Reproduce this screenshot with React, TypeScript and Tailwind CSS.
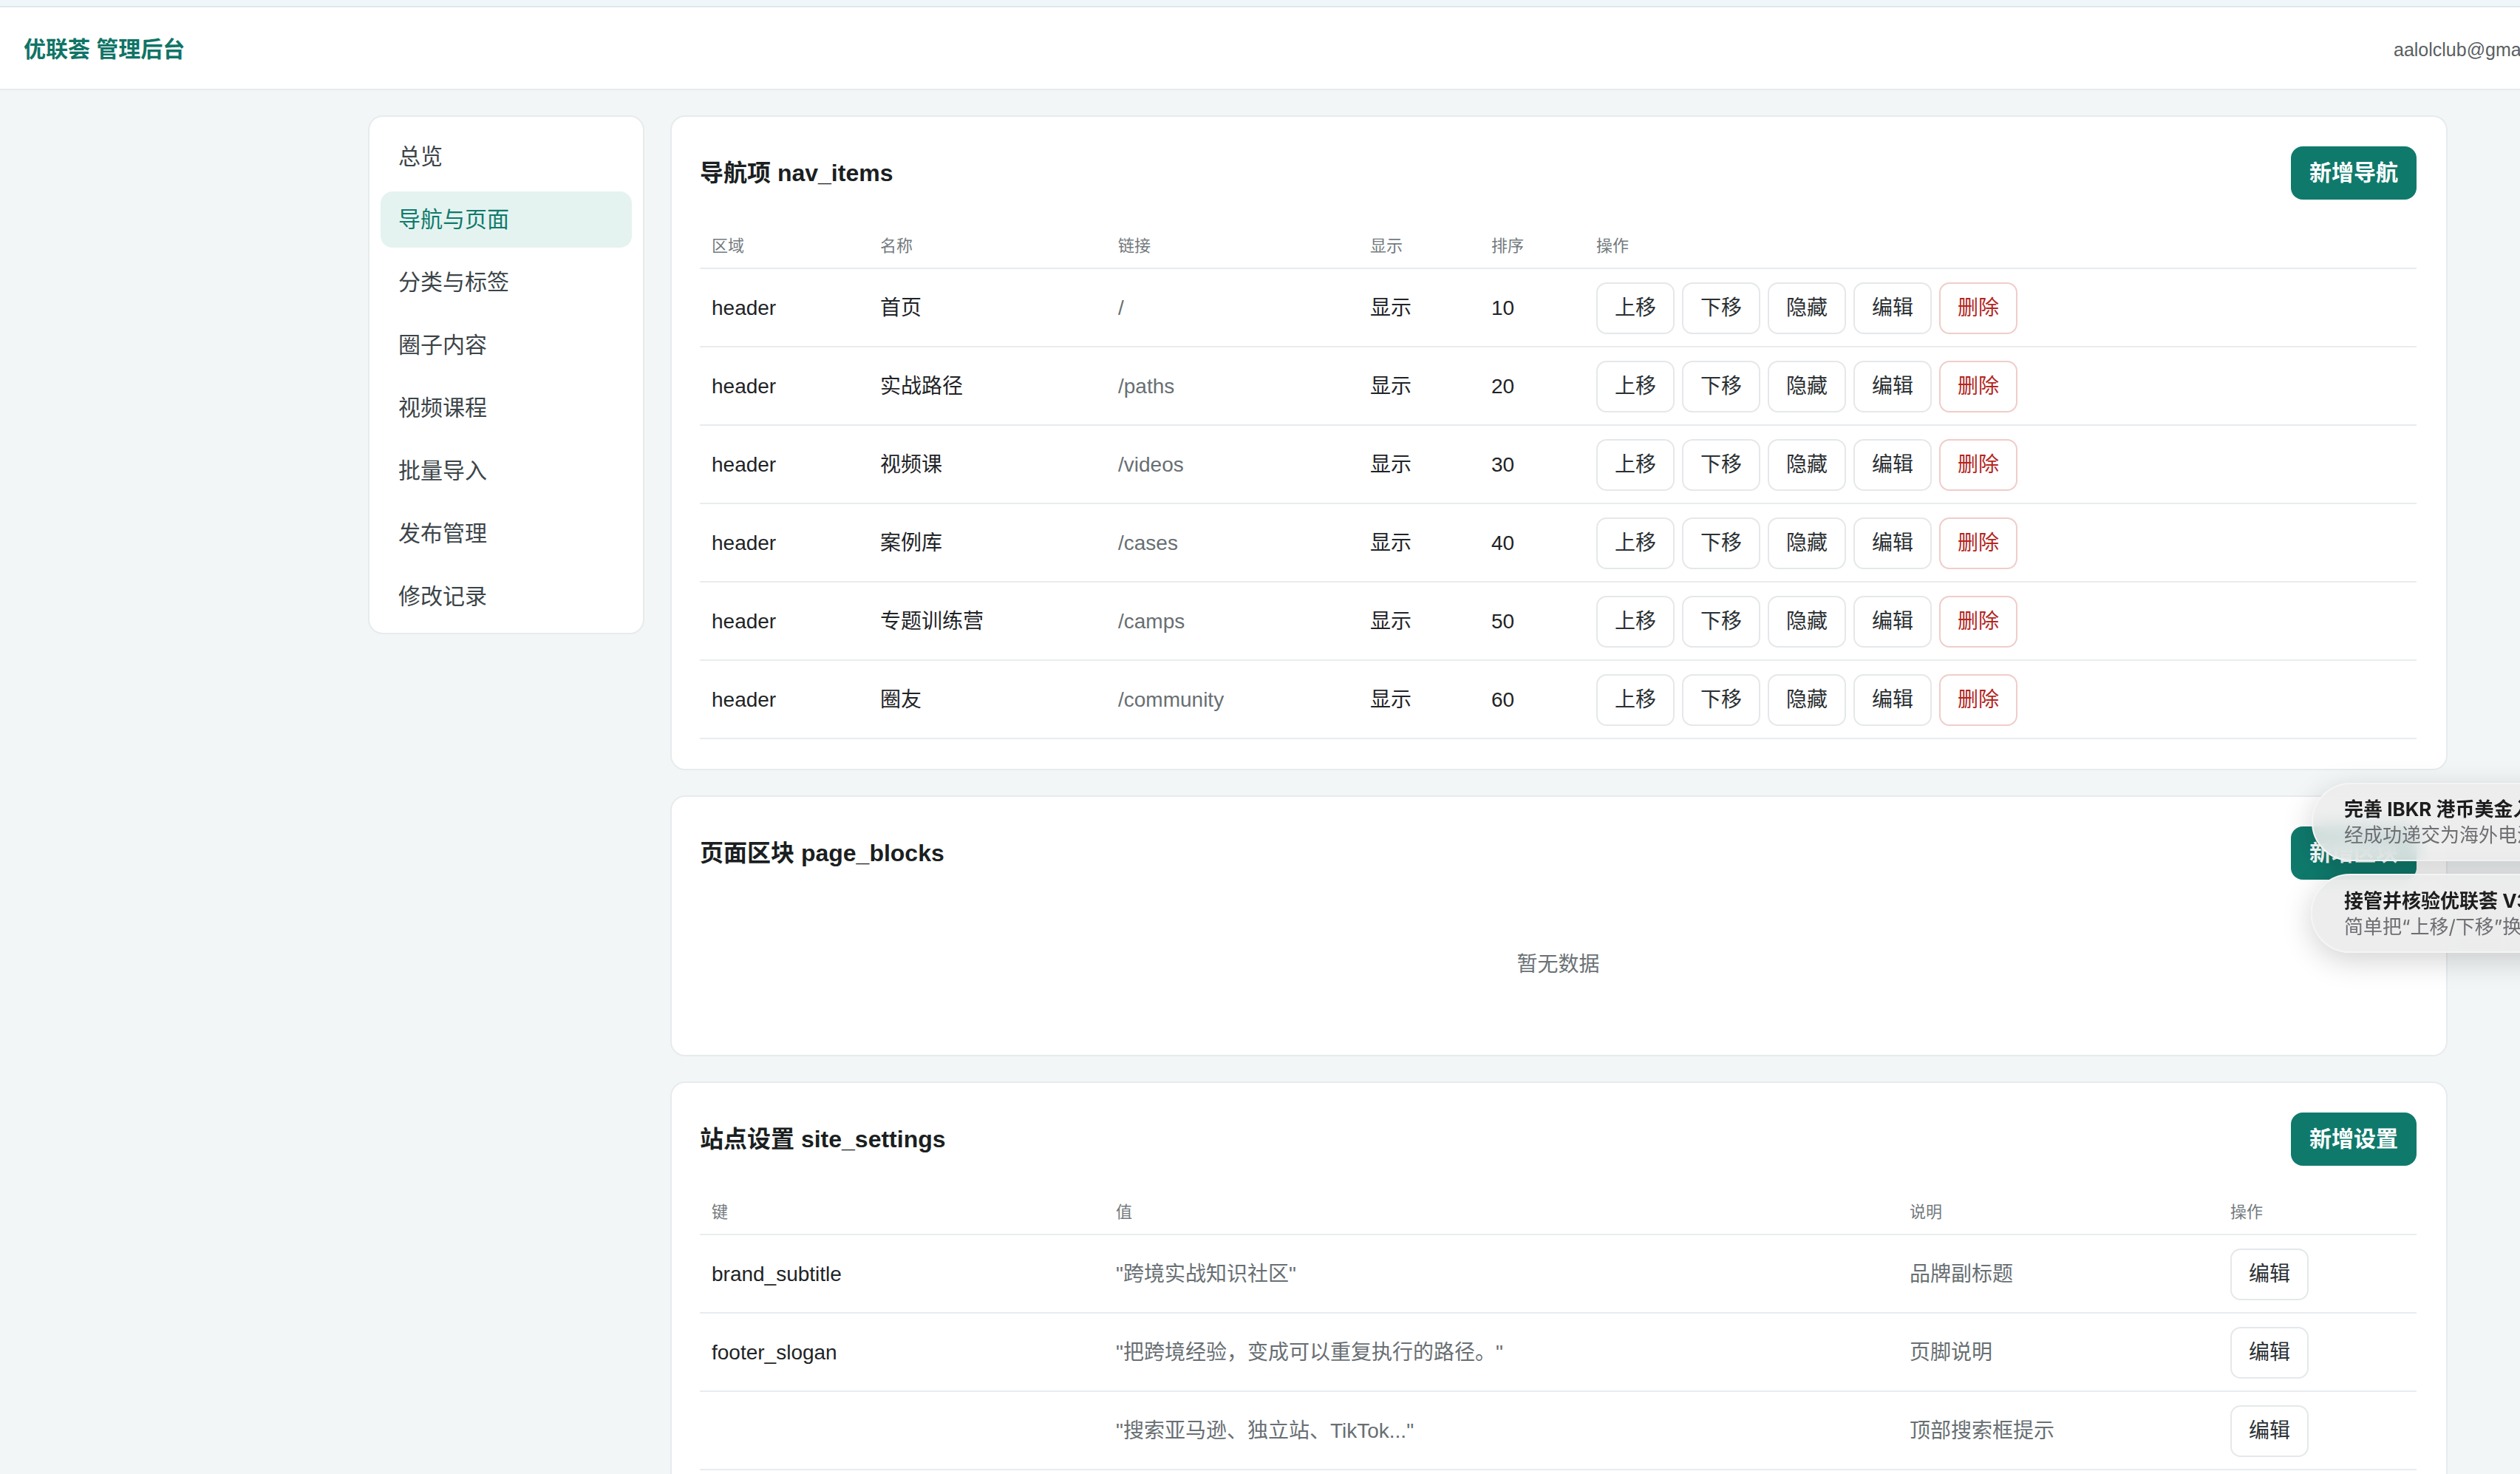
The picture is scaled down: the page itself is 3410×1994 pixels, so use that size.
import React from "react";

const navRows = [
  { area: "header", name: "首页", link: "/", show: "显示", order: 10 },
  { area: "header", name: "实战路径", link: "/paths", show: "显示", order: 20 },
  { area: "header", name: "视频课", link: "/videos", show: "显示", order: 30 },
  { area: "header", name: "案例库", link: "/cases", show: "显示", order: 40 },
  { area: "header", name: "专题训练营", link: "/camps", show: "显示", order: 50 },
  { area: "header", name: "圈友", link: "/community", show: "显示", order: 60 },
];

const settingRows = [
  { key: "brand_subtitle", value: "\"跨境实战知识社区\"", desc: "品牌副标题" },
  { key: "footer_slogan", value: "\"把跨境经验，变成可以重复执行的路径。\"", desc: "页脚说明" },
  { key: "", value: "\"搜索亚马逊、独立站、TikTok...\"", desc: "顶部搜索框提示" },
];

const sideItems = ["总览", "导航与页面", "分类与标签", "圈子内容", "视频课程", "批量导入", "发布管理", "修改记录"];

function Btn({ children, danger }: { children: React.ReactNode; danger?: boolean }) {
  return (
    <button
      className={
        "h-[70px] px-[23px] rounded-[14px] border-2 bg-white text-[28px] leading-none whitespace-nowrap " +
        (danger ? "border-[#efcdca] text-[#b3261e]" : "border-[#e5e8ea] text-[#2b3033]")
      }
    >
      {children}
    </button>
  );
}

function PrimaryBtn({ children }: { children: React.ReactNode }) {
  return (
    <button className="h-[72px] px-[25px] rounded-[16px] bg-[#0f7a6c] text-white text-[30px] font-semibold leading-none whitespace-nowrap">
      {children}
    </button>
  );
}

function CardHead({ title, action }: { title: string; action: string }) {
  return (
    <div className="flex items-center justify-between h-[72px]">
      <h2 className="text-[32px] font-bold text-[#1b1f22] leading-none">{title}</h2>
      <PrimaryBtn>{action}</PrimaryBtn>
    </div>
  );
}

export default function App() {
  return (
    <div className="relative w-[3410px] h-[1994px] overflow-hidden bg-[#f3f6f7] font-['Liberation_Sans','Noto_Sans_CJK_SC',sans-serif]">
      <div className="h-[10px] bg-[#eef6f9] border-b-2 border-[#dfe7ea]" />
      <header className="h-[112px] bg-white border-b-2 border-[#e6ebed] flex items-center pl-[32px] pt-[4px]">
        <div className="w-[3207px] shrink-0 text-[30px] font-bold text-[#0f7466] leading-none">优联荟 管理后台</div>
        <div className="text-[25px] text-[#5a5f62] whitespace-nowrap leading-none">aalolclub@gmail.com</div>
      </header>

      <div className="flex items-start gap-[35px] pl-[498px] pt-[34px]">
        <aside className="w-[374px] shrink-0 bg-white border-2 border-[#e6ebed] rounded-[20px] pt-[16px] pb-[11px] px-[15px] flex flex-col gap-[9px]">
          {sideItems.map((s, i) => (
            <div
              key={s}
              className={
                "h-[76px] rounded-[16px] px-[24px] flex items-center text-[30px] leading-none " +
                (i === 1 ? "bg-[#e5f3f0] text-[#0f7a6c]" : "text-[#3c4549]")
              }
            >
              {s}
            </div>
          ))}
        </aside>

        <main className="w-[2405px] shrink-0 flex flex-col gap-[34px]">
          <section className="bg-white border-2 border-[#e6ebed] rounded-[20px] pl-[38px] pr-[40px] py-[40px]">
            <CardHead title="导航项 nav_items" action="新增导航" />
            <div className="mt-[32px]">
              <div className="grid grid-cols-[228px_322px_341px_164px_142px_1fr] h-[62px] items-center border-b-2 border-[#e8ecee] text-[22px] text-[#737a7e]">
                <div className="px-[16px]">区域</div>
                <div className="px-[16px]">名称</div>
                <div className="px-[16px]">链接</div>
                <div className="px-[16px]">显示</div>
                <div className="px-[16px]">排序</div>
                <div className="px-[16px]">操作</div>
              </div>
              {navRows.map((r) => (
                <div
                  key={r.link}
                  className="grid grid-cols-[228px_322px_341px_164px_142px_1fr] h-[106px] items-center border-b-2 border-[#e8ecee] text-[28px] text-[#1f2427]"
                >
                  <div className="px-[16px] pt-[2px]">{r.area}</div>
                  <div className="px-[16px] pt-[2px]">{r.name}</div>
                  <div className="px-[16px] pt-[2px] text-[#686f73]">{r.link}</div>
                  <div className="px-[16px] pt-[2px]">{r.show}</div>
                  <div className="px-[16px] pt-[2px]">{r.order}</div>
                  <div className="px-[16px] pt-[2px] flex gap-[10px]">
                    <Btn>上移</Btn>
                    <Btn>下移</Btn>
                    <Btn>隐藏</Btn>
                    <Btn>编辑</Btn>
                    <Btn danger>删除</Btn>
                  </div>
                </div>
              ))}
            </div>
          </section>

          <section className="bg-white border-2 border-[#e6ebed] rounded-[20px] pl-[38px] pr-[40px] py-[40px]">
            <CardHead title="页面区块 page_blocks" action="新增区块" />
            <div className="mt-[32px] h-[165px] flex items-center justify-center text-[28px] text-[#6b7276]">暂无数据</div>
          </section>

          <section className="bg-white border-2 border-[#e6ebed] rounded-[20px] pl-[38px] pr-[40px] py-[40px]">
            <CardHead title="站点设置 site_settings" action="新增设置" />
            <div className="mt-[32px]">
              <div className="grid grid-cols-[547px_1074px_434px_1fr] h-[62px] items-center border-b-2 border-[#e8ecee] text-[22px] text-[#737a7e]">
                <div className="px-[16px]">键</div>
                <div className="px-[16px]">值</div>
                <div className="px-[16px]">说明</div>
                <div className="px-[16px]">操作</div>
              </div>
              {settingRows.map((r) => (
                <div
                  key={r.value}
                  className="grid grid-cols-[547px_1074px_434px_1fr] h-[106px] items-center border-b-2 border-[#e8ecee] text-[28px] text-[#1f2427]"
                >
                  <div className="px-[16px] pt-[2px]">{r.key}</div>
                  <div className="px-[16px] pt-[2px] text-[#686f73]">{r.value}</div>
                  <div className="px-[16px] pt-[2px] text-[#686f73]">{r.desc}</div>
                  <div className="px-[16px] pt-[2px] flex">
                    <Btn>编辑</Btn>
                  </div>
                </div>
              ))}
            </div>
          </section>
        </main>
      </div>

      {/* notification overlays */}
      <div className="absolute left-[3128px] top-[1059px] w-[640px] h-[106px] rounded-[53px] bg-[#ebebeb]/85 backdrop-blur-md border-2 border-[#f4f4f4] shadow-[0_10px_40px_rgba(0,0,0,0.18)] pl-[42px] flex flex-col justify-center font-['Inter','Noto_Sans_CJK_SC',sans-serif] text-[26px] leading-[35px] whitespace-nowrap">
        <div className="font-bold text-[#1d1d1f]">完善 IBKR 港币美金入金流程</div>
        <div className="text-[#6e6e73]">经成功递交为海外电汇申请</div>
      </div>
      <div className="absolute left-[3127px] top-[1182px] w-[640px] h-[107px] rounded-[53px] bg-[#ebebeb]/90 backdrop-blur-md border-2 border-[#f4f4f4] shadow-[0_10px_40px_rgba(0,0,0,0.18)] pl-[43px] flex flex-col justify-center font-['Inter','Noto_Sans_CJK_SC',sans-serif] text-[26px] leading-[35px] whitespace-nowrap">
        <div className="font-bold text-[#1d1d1f]">接管并核验优联荟 V3 后台</div>
        <div className="text-[#6e6e73]">简单把“上移/下移”换成拖拽</div>
      </div>
    </div>
  );
}
